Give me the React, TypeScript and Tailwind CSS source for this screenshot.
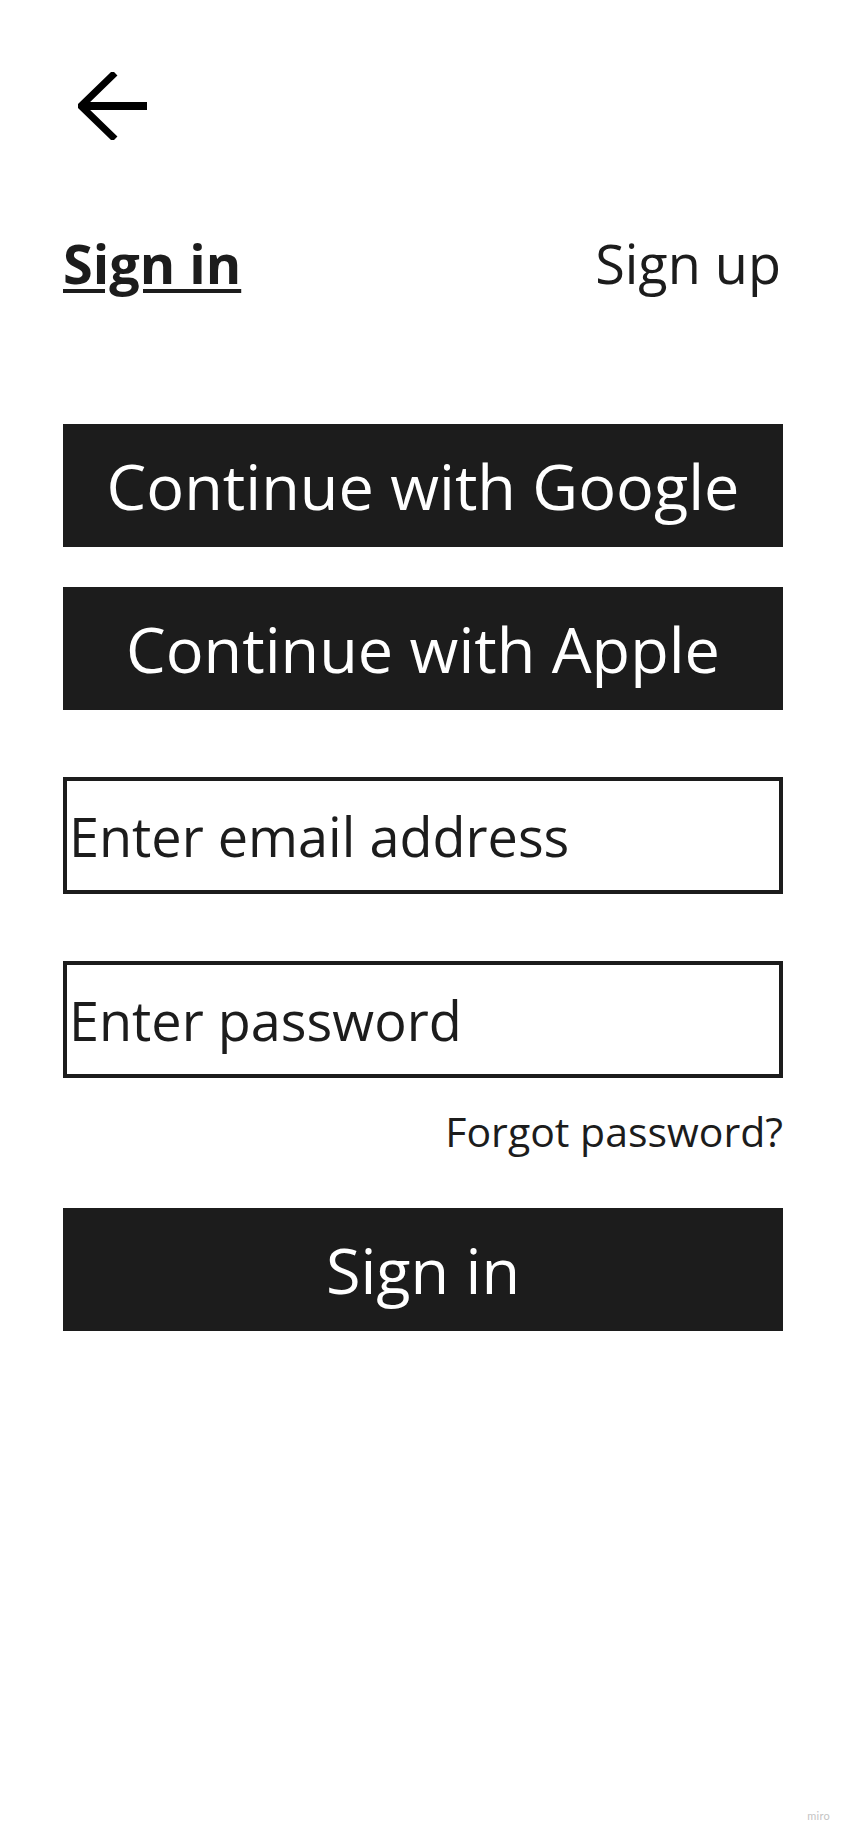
import React from "react";

/**
 * SignInScreen — 로그인 화면 와이어프레임.
 * 뒤로가기 화살표, 탭(Sign in / Sign up), 소셜 로그인 버튼, 입력 필드, 로그인 버튼.
 */

const font = "font-['Open_Sans','Liberation_Sans',sans-serif]";

const BackArrow: React.FC = () => (
  <svg width="70" height="68" viewBox="0 0 70 68" fill="none" aria-hidden>
    <path d="M37 1 L3 34 L37 67" stroke="#000" strokeWidth="7" strokeLinejoin="miter" />
    <path d="M4 34 H69" stroke="#000" strokeWidth="8" />
  </svg>
);

const DarkButton: React.FC<{ label: string; className?: string }> = ({ label, className = "" }) => (
  <button
    className={`w-full h-[123px] bg-[#1c1c1c] text-white flex items-center justify-center text-[63px] leading-none ${className}`}
  >
    {label}
  </button>
);

const TextField: React.FC<{ placeholder: string; type?: string; className?: string }> = ({
  placeholder,
  type = "text",
  className = "",
}) => (
  <input
    type={type}
    placeholder={placeholder}
    className={`w-full h-[117px] border-4 border-[#1c1c1c] bg-white pl-[2px] text-[54px] leading-none text-[#1c1c1c] placeholder-[#1c1c1c] placeholder:text-[#1c1c1c] focus:outline-none ${className}`}
  />
);

export default function App() {
  return (
    <div className={`relative min-h-[1839px] w-full bg-white ${font}`}>
      <div className="flex flex-col pl-[63px] pr-[66px] pt-[72px]">
        <div className="ml-[15px]">
          <BackArrow />
        </div>

        <div className="mt-[96px] flex items-start justify-between text-[54px] leading-none text-[#1c1c1c]">
          <span className="font-bold underline decoration-4 underline-offset-[5px]">Sign in</span>
          <span className="mr-[2px]">Sign up</span>
        </div>

        <DarkButton label="Continue with Google" className="mt-[134px]" />
        <DarkButton label="Continue with Apple" className="mt-[40px]" />

        <TextField placeholder="Enter email address" className="mt-[67px]" />
        <TextField placeholder="Enter password" type="password" className="mt-[67px] h-[116px]" />

        <div className="mt-[33px] text-right text-[41px] leading-none text-[#1c1c1c]">Forgot password?</div>

        <DarkButton label="Sign in" className="mt-[56px]" />
      </div>

      <span className="absolute right-[19px] bottom-[18px] text-[11px] leading-none tracking-wide text-[#c4c4c4] font-['Lato',sans-serif]">
        miro
      </span>
    </div>
  );
}
